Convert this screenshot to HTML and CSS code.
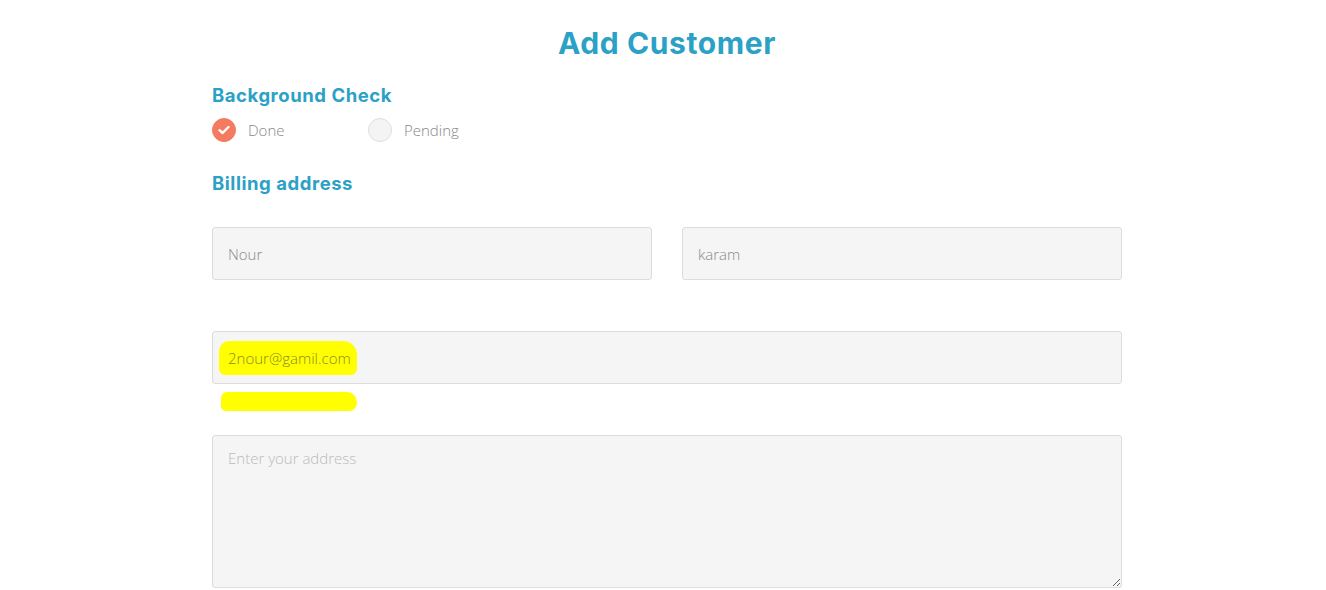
FILE: index.html
```html
<!DOCTYPE html>
<html>
<head>
<meta charset="utf-8">
<link rel="stylesheet" href="styles.css">
</head>
<body>
<div class="page">
  <h1 class="title">Add Customer</h1>
  <h2 class="section">Background Check</h2>
  <div class="radios">
    <label class="radio">
      <span class="dot checked">
        <svg width="12" height="10" viewBox="0 0 12 10"><path d="M1.5 5.2 L4.6 8 L10.5 2" fill="none" stroke="#fff" stroke-width="2.4" stroke-linecap="round" stroke-linejoin="round"/></svg>
      </span>
      <span class="rlabel">Done</span>
    </label>
    <label class="radio">
      <span class="dot"></span>
      <span class="rlabel">Pending</span>
    </label>
  </div>
  <h2 class="section billing">Billing address</h2>
  <div class="row">
    <div class="field">Nour</div>
    <div class="field">karam</div>
  </div>
  <div class="email-wrap">
    <div class="field email"><span class="hl">2nour@gamil.com</span></div>
    <div class="stripe"></div>
  </div>
  <textarea class="area" placeholder="Enter your address"></textarea>
</div>
</body>
</html>
```
FILE: styles.css
```css
html, body {
  margin: 0;
  padding: 0;
  background: #fff;
}
body {
  padding-left: 8px;
  font-family: "Open Sans", "Liberation Sans", sans-serif;
}
.page {
  width: 910px;
  margin: 0 auto;
}
.title {
  margin: 0;
  padding-top: 24px;
  text-align: center;
  font-family: "Inter", "Liberation Sans", sans-serif;
  font-weight: 700;
  font-size: 30px;
  letter-spacing: 0.6px;
  line-height: 38px;
  color: #2ba1c5;
}
.section {
  margin: 0;
  font-family: "Inter", "Liberation Sans", sans-serif;
  font-weight: 700;
  font-size: 18.5px;
  letter-spacing: 0.55px;
  line-height: 22px;
  color: #2ba1c5;
}
.title + .section { margin-top: 22px; }
.radios {
  display: flex;
  margin-top: 12px;
  height: 24px;
}
.radio {
  display: flex;
  align-items: center;
  width: 156px;
}
.dot {
  width: 22px;
  height: 22px;
  border-radius: 50%;
  border: 1px solid #dedede;
  background: #f4f4f4;
  display: flex;
  align-items: center;
  justify-content: center;
}
.dot.checked {
  background: #f47a60;
  border-color: #f47a60;
}
.rlabel {
  margin-left: 12px;
  font-size: 15px;
  font-weight: 300;
  color: #888;
}
.section.billing { margin-top: 30px; }
.row {
  display: flex;
  gap: 30px;
  margin-top: 33px;
}
.field {
  box-sizing: border-box;
  flex: 1;
  height: 53px;
  background: #f5f5f5;
  border: 1px solid #dcdcdc;
  border-radius: 3px;
  padding: 0 15px;
  display: flex;
  align-items: center;
  font-size: 15px;
  font-weight: 300;
  color: #888;
}
.email-wrap {
  position: relative;
  margin-top: 51px;
}
.field.email { width: 100%; }
.hl {
  position: relative;
  z-index: 1;
  color: #8a8a2a;
}
.hl::before {
  content: "";
  position: absolute;
  left: -9px;
  right: -6px;
  top: -7px;
  bottom: -7px;
  background: #ffff00;
  border-radius: 10px 14px 6px 6px;
  z-index: -1;
}
.stripe {
  position: absolute;
  left: 9px;
  top: 61px;
  width: 136px;
  height: 19px;
  background: #ffff00;
  border-radius: 6px 10px 8px 5px;
}
.area {
  display: block;
  box-sizing: border-box;
  width: 910px;
  height: 153px;
  margin-top: 51px;
  background: #f5f5f5;
  border: 1px solid #dcdcdc;
  border-radius: 3px;
  padding: 12px 15px;
  font-family: "Open Sans", "Liberation Sans", sans-serif;
  font-size: 15px;
  font-weight: 300;
  color: #888;
  resize: both;
  outline: none;
}
.area::placeholder {
  color: #bbb;
}
```
